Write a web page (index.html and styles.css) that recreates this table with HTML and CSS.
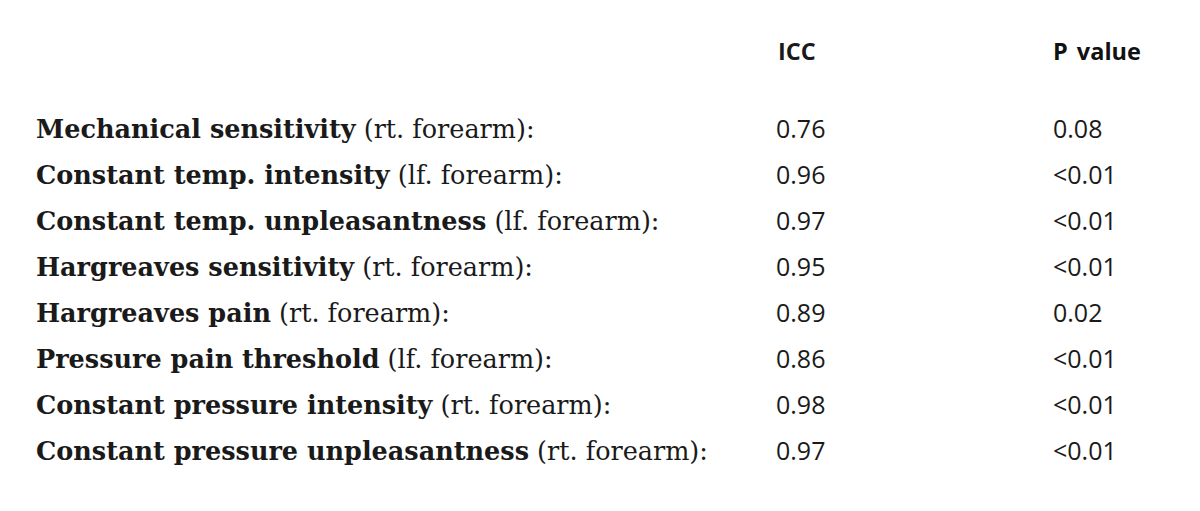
FILE: index.html
```html
<!DOCTYPE html>
<html>
<head>
<meta charset="utf-8">
<link rel="stylesheet" href="styles.css">
</head>
<body>
<div class="table">
  <div class="row head">
    <div class="label"></div>
    <div class="icc">ICC</div>
    <div class="p">P value</div>
  </div>
  <div class="body">
    <div class="row"><div class="label"><b>Mechanical sensitivity</b> (rt. forearm):</div><div class="icc">0.76</div><div class="p val">0.08</div></div>
    <div class="row"><div class="label"><b>Constant temp. intensity</b> (lf. forearm):</div><div class="icc">0.96</div><div class="p val">&lt;0.01</div></div>
    <div class="row"><div class="label"><b>Constant temp. unpleasantness</b> (lf. forearm):</div><div class="icc">0.97</div><div class="p val">&lt;0.01</div></div>
    <div class="row"><div class="label"><b>Hargreaves sensitivity</b> (rt. forearm):</div><div class="icc">0.95</div><div class="p val">&lt;0.01</div></div>
    <div class="row"><div class="label"><b>Hargreaves pain</b> (rt. forearm):</div><div class="icc">0.89</div><div class="p val">0.02</div></div>
    <div class="row"><div class="label"><b>Pressure pain threshold</b> (lf. forearm):</div><div class="icc">0.86</div><div class="p val">&lt;0.01</div></div>
    <div class="row"><div class="label"><b>Constant pressure intensity</b> (rt. forearm):</div><div class="icc">0.98</div><div class="p val">&lt;0.01</div></div>
    <div class="row"><div class="label"><b>Constant pressure unpleasantness</b> (rt. forearm):</div><div class="icc">0.97</div><div class="p val">&lt;0.01</div></div>
  </div>
</div>
</body>
</html>
```
FILE: styles.css
```css
html, body {
  margin: 0;
  padding: 0;
  background: #ffffff;
  color: #111111;
}
.table {
  width: 1200px;
  height: 511px;
  padding: 0 0 0 36px;
  box-sizing: border-box;
}
.row {
  display: grid;
  grid-template-columns: 740px 277px 1fr;
  align-items: baseline;
  height: 46px;
  line-height: 46px;
}
.head {
  padding-top: 28px;
  height: 46px;
  margin-bottom: 31px;
}
.head .icc, .head .p {
  font-family: "Open Sans", sans-serif;
  font-weight: 700;
  font-size: 23.5px;
}
.head .icc {
  padding-left: 2px;
}
.head .p {
  word-spacing: 3px;
}
.label {
  font-family: "DejaVu Serif", serif;
  font-size: 25.5px;
  white-space: nowrap;
  color: #1a1a1a;
}
.label b {
  font-weight: 700;
}
.icc, .val {
  font-family: "Open Sans", sans-serif;
  font-size: 25px;
  color: #1a1a1a;
}
```
